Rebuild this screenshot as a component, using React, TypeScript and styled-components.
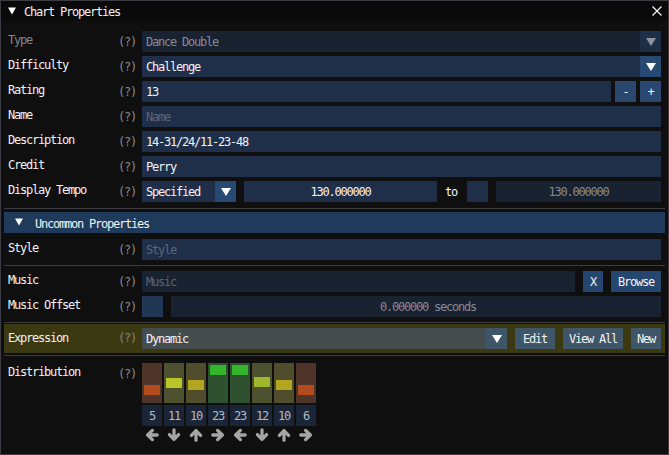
import React from 'react';
import styled, { createGlobalStyle } from 'styled-components';

const GlobalStyle = createGlobalStyle`
  html, body { margin: 0; padding: 0; background: #0f0f0f; }
  body {
    font-family: 'DejaVu Sans Mono', 'Liberation Mono', monospace;
    font-size: 12px;
    letter-spacing: -1.22px;
    color: #f2f2f2;
  }
  * { box-sizing: border-box; }
`;

const Window = styled.div`
  width: 669px;
  height: 455px;
  border: 1px solid #3c3c42;
  background: #0f0f0f;
  display: flex;
  flex-direction: column;
  overflow: hidden;
`;

const TitleBar = styled.div`
  height: 20px;
  flex-shrink: 0;
  background: #0a0a0a;
  display: flex;
  align-items: flex-start;
  padding-left: 7px;
  padding-right: 6px;
  overflow: hidden;
`;

const TitleArrow = styled.svg`
  margin-top: 6px;
  flex-shrink: 0;
`;

const TitleText = styled.div`
  margin-left: 8px;
  padding-top: 2px;
  line-height: 18px;
  flex: 1;
  white-space: nowrap;
`;

const CloseIcon = styled.svg`
  margin-top: 5px;
  flex-shrink: 0;
`;

const Body = styled.div`
  flex: 1;
  display: flex;
  flex-direction: column;
  padding: 10px 7px 0 7px;
`;

const Group = styled.div`
  display: flex;
  flex-direction: column;
  gap: 4px;
`;

const Row = styled.div<{ $mt?: number }>`
  display: flex;
  height: 21px;
  margin-top: ${p => p.$mt ?? 0}px;
`;

const TallRow = styled.div<{ $mt?: number }>`
  display: flex;
  margin-top: ${p => p.$mt ?? 0}px;
`;

const Label = styled.div<{ $dim?: boolean; $framed?: boolean }>`
  width: 110px;
  flex-shrink: 0;
  line-height: ${p => (p.$framed ? '21px' : '18px')};
  color: ${p => (p.$dim ? '#80868f' : '#f2f2f2')};
  white-space: nowrap;
`;

const Help = styled.div<{ $framed?: boolean; $olive?: boolean }>`
  width: 24px;
  flex-shrink: 0;
  padding-top: ${p => (p.$framed ? '0' : '1px')};
  line-height: ${p => (p.$framed ? '20px' : '21px')};
  color: ${p => (p.$olive ? '#86846a' : '#8a8a8a')};
  white-space: nowrap;
`;

const Controls = styled.div`
  flex: 1;
  min-width: 0;
  display: flex;
  gap: 8px;
`;

const TightControls = styled(Controls)`
  gap: 4px;
`;

type Tone = 'field' | 'disabled' | 'expr' | 'accent';
type Ink = 'normal' | 'dim' | 'placeholder';

const toneBg: Record<Tone, string> = {
  field: '#1f2f4a',
  disabled: '#182231',
  expr: '#444d4e',
  accent: '#203756',
};

const inkColor: Record<Ink, string> = {
  normal: '#f2f2f2',
  dim: '#858b95',
  placeholder: '#5d6676',
};

const Field = styled.div<{ $tone?: Tone; $w?: number; $ink?: Ink; $center?: boolean; $padL?: number }>`
  height: 21px;
  flex: ${p => (p.$w ? `0 0 ${p.$w}px` : '1 1 0')};
  min-width: 0;
  background: ${p => toneBg[p.$tone ?? 'field']};
  padding: 1px 4px 0 ${p => p.$padL ?? 4}px;
  line-height: 21px;
  overflow: hidden;
  white-space: nowrap;
  color: ${p => inkColor[p.$ink ?? 'normal']};
  text-align: ${p => (p.$center ? 'center' : 'left')};
`;

const Combo = styled.div<{ $w?: number }>`
  display: flex;
  height: 21px;
  flex: ${p => (p.$w ? `0 0 ${p.$w}px` : '1 1 0')};
  min-width: 0;
`;

const ComboArrow = styled.div<{ $bg: string }>`
  flex: 0 0 21px;
  height: 21px;
  background: ${p => p.$bg};
  display: flex;
  align-items: center;
  justify-content: center;
`;

const Btn = styled.div<{ $w: number; $bg: string }>`
  flex: 0 0 ${p => p.$w}px;
  height: 21px;
  background: ${p => p.$bg};
  padding-top: 1px;
  line-height: 21px;
  text-align: center;
  white-space: nowrap;
  color: #f2f2f2;
  overflow: hidden;
`;

const Plain = styled.div<{ $w: number }>`
  flex: 0 0 ${p => p.$w}px;
  padding-top: 1px;
  line-height: 21px;
  white-space: nowrap;
`;

const Separator = styled.div<{ $mt: number; $mb: number }>`
  height: 1px;
  flex-shrink: 0;
  background: #3b3b40;
  margin: ${p => p.$mt}px -4px ${p => p.$mb}px;
`;

const Header = styled.div`
  height: 21px;
  flex-shrink: 0;
  margin: 0 -4px;
  background: #1f3a5b;
  display: flex;
  align-items: flex-start;
  padding-left: 11px;
`;

const HeaderArrow = styled.svg`
  margin-top: 6px;
  flex-shrink: 0;
`;

const HeaderText = styled.div`
  margin-left: 12px;
  padding-top: 3px;
  line-height: 18px;
  white-space: nowrap;
`;

const OliveBand = styled.div`
  margin: 0 -4px;
  padding: 4px;
  background: #3b3912;
  flex-shrink: 0;
`;

const Chart = styled.div`
  display: flex;
  flex-direction: column;
`;

const Cells = styled.div<{ $mt?: number }>`
  display: flex;
  gap: 2px;
  margin-top: ${p => p.$mt ?? 0}px;
`;

const Bar = styled.div<{ $bg: string }>`
  width: 20px;
  height: 40px;
  background: ${p => p.$bg};
  display: flex;
  flex-direction: column;
  align-items: center;
`;

const Marker = styled.div<{ $color: string; $top: number }>`
  width: 16px;
  height: 10px;
  margin-top: ${p => p.$top}px;
  background: ${p => p.$color};
`;

const Count = styled.div`
  width: 20px;
  height: 21px;
  background: #1a2638;
  color: #b4b9c1;
  text-align: center;
  padding-top: 2px;
  line-height: 19px;
  white-space: nowrap;
`;

const ArrowCell = styled.div`
  width: 20px;
  height: 14px;
  display: flex;
  justify-content: center;
`;

const ArrowSvg = styled.svg<{ $rot: number }>`
  transform: rotate(${p => p.$rot}deg);
`;

const Tri = ({ w, h, color }: { w: number; h: number; color: string }) => (
  <svg width={w} height={h} viewBox={`0 0 ${w} ${h}`}>
    <polygon points={`0,0 ${w},0 ${w / 2},${h}`} fill={color} />
  </svg>
);

type Dir = 'left' | 'down' | 'up' | 'right';
const rotFor: Record<Dir, number> = { left: 0, down: -90, up: 90, right: 180 };

const StepArrow = ({ dir }: { dir: Dir }) => (
  <ArrowSvg $rot={rotFor[dir]} width={14} height={14} viewBox="0 0 14 14">
    <path
      d="M3 7 H12.2 M7.4 2.4 L2.6 7 L7.4 11.6"
      fill="none"
      stroke="#a5a5a5"
      strokeWidth={3.3}
      strokeLinecap="round"
      strokeLinejoin="round"
    />
  </ArrowSvg>
);

const bars: { n: number; bg: string; mk: string; top: number; dir: Dir }[] = [
  { n: 5, bg: '#4f342a', mk: '#b34b1f', top: 22, dir: 'left' },
  { n: 11, bg: '#4e5130', mk: '#b8c52a', top: 15, dir: 'down' },
  { n: 10, bg: '#4f4d2c', mk: '#b3a51f', top: 17, dir: 'up' },
  { n: 23, bg: '#2e5230', mk: '#34b52b', top: 2, dir: 'right' },
  { n: 23, bg: '#2e5230', mk: '#34b52b', top: 2, dir: 'left' },
  { n: 12, bg: '#4e5130', mk: '#9db82a', top: 14, dir: 'down' },
  { n: 10, bg: '#4f4d2c', mk: '#b3a51f', top: 17, dir: 'up' },
  { n: 6, bg: '#4f342a', mk: '#b34b1f', top: 22, dir: 'right' },
];

const Q = '(?)';

export default function App() {
  return (
    <>
      <GlobalStyle />
      <Window>
        <TitleBar>
          <TitleArrow width={8} height={8} viewBox="0 0 8 8">
            <polygon points="0,0.5 8,0.5 4,7.5" fill="#ffffff" />
          </TitleArrow>
          <TitleText>Chart Properties</TitleText>
          <CloseIcon width={10} height={10} viewBox="0 0 10 10">
            <path d="M0.5 0.5 L9.5 9.5 M9.5 0.5 L0.5 9.5" stroke="#ffffff" strokeWidth={1.1} />
          </CloseIcon>
        </TitleBar>
        <Body>
          <Group>
            <Row>
              <Label $dim>Type</Label>
              <Help>{Q}</Help>
              <Controls>
                <Combo>
                  <Field $tone="disabled" $ink="dim">Dance Double</Field>
                  <ComboArrow $bg="#1d2e46">
                    <Tri w={10} h={8} color="#8d939c" />
                  </ComboArrow>
                </Combo>
              </Controls>
            </Row>
            <Row>
              <Label>Difficulty</Label>
              <Help>{Q}</Help>
              <Controls>
                <Combo>
                  <Field>Challenge</Field>
                  <ComboArrow $bg="#284a72">
                    <Tri w={10} h={8} color="#ffffff" />
                  </ComboArrow>
                </Combo>
              </Controls>
            </Row>
            <Row>
              <Label>Rating</Label>
              <Help>{Q}</Help>
              <TightControls>
                <Field>13</Field>
                <Btn $w={21} $bg="#29476f">-</Btn>
                <Btn $w={21} $bg="#29476f">+</Btn>
              </TightControls>
            </Row>
            <Row>
              <Label>Name</Label>
              <Help>{Q}</Help>
              <Controls>
                <Field $ink="placeholder">Name</Field>
              </Controls>
            </Row>
            <Row>
              <Label>Description</Label>
              <Help>{Q}</Help>
              <Controls>
                <Field>14-31/24/11-23-48</Field>
              </Controls>
            </Row>
            <Row>
              <Label>Credit</Label>
              <Help>{Q}</Help>
              <Controls>
                <Field>Perry</Field>
              </Controls>
            </Row>
            <Row>
              <Label>Display Tempo</Label>
              <Help>{Q}</Help>
              <Controls>
                <Combo $w={94}>
                  <Field>Specified</Field>
                  <ComboArrow $bg="#284a72">
                    <Tri w={10} h={8} color="#ffffff" />
                  </ComboArrow>
                </Combo>
                <Field $w={193} $center>130.000000</Field>
                <Plain $w={14}>to</Plain>
                <Field $w={21} />
                <Field $tone="disabled" $ink="dim" $center>130.000000</Field>
              </Controls>
            </Row>
          </Group>

          <Separator $mt={6} $mb={3} />
          <Header>
            <HeaderArrow width={8} height={8} viewBox="0 0 8 8">
              <polygon points="0,0.5 8,0.5 4,7.5" fill="#ffffff" />
            </HeaderArrow>
            <HeaderText>Uncommon Properties</HeaderText>
          </Header>

          <Row $mt={6}>
            <Label>Style</Label>
            <Help>{Q}</Help>
            <Controls>
              <Field $ink="placeholder">Style</Field>
            </Controls>
          </Row>

          <Separator $mt={5} $mb={5} />
          <Group>
            <Row>
              <Label>Music</Label>
              <Help>{Q}</Help>
              <Controls>
                <Field $tone="disabled" $ink="placeholder">Music</Field>
                <Btn $w={20} $bg="#25466f">X</Btn>
                <Btn $w={50} $bg="#25466f">Browse</Btn>
              </Controls>
            </Row>
            <Row>
              <Label>Music Offset</Label>
              <Help>{Q}</Help>
              <Controls>
                <Field $w={21} $tone="accent" />
                <Field $tone="disabled" $ink="dim" $center $padL={28}>0.000000 seconds</Field>
              </Controls>
            </Row>
          </Group>

          <Separator $mt={5} $mb={1} />
          <OliveBand>
            <Row>
              <Label $framed>Expression</Label>
              <Help $framed $olive>{Q}</Help>
              <Controls>
                <Combo>
                  <Field $tone="expr">Dynamic</Field>
                  <ComboArrow $bg="#3f5668">
                    <Tri w={10} h={8} color="#ffffff" />
                  </ComboArrow>
                </Combo>
                <Btn $w={40} $bg="#3f5668">Edit</Btn>
                <Btn $w={60} $bg="#3f5668">View All</Btn>
                <Btn $w={30} $bg="#3f5668">New</Btn>
              </Controls>
            </Row>
          </OliveBand>
          <Separator $mt={2} $mb={7} />

          <TallRow>
            <Label>Distribution</Label>
            <Help>{Q}</Help>
            <Chart>
              <Cells>
                {bars.map((b, i) => (
                  <Bar key={i} $bg={b.bg}>
                    <Marker $color={b.mk} $top={b.top} />
                  </Bar>
                ))}
              </Cells>
              <Cells $mt={2}>
                {bars.map((b, i) => (
                  <Count key={i}>{b.n}</Count>
                ))}
              </Cells>
              <Cells $mt={2}>
                {bars.map((b, i) => (
                  <ArrowCell key={i}>
                    <StepArrow dir={b.dir} />
                  </ArrowCell>
                ))}
              </Cells>
            </Chart>
          </TallRow>
        </Body>
      </Window>
    </>
  );
}
